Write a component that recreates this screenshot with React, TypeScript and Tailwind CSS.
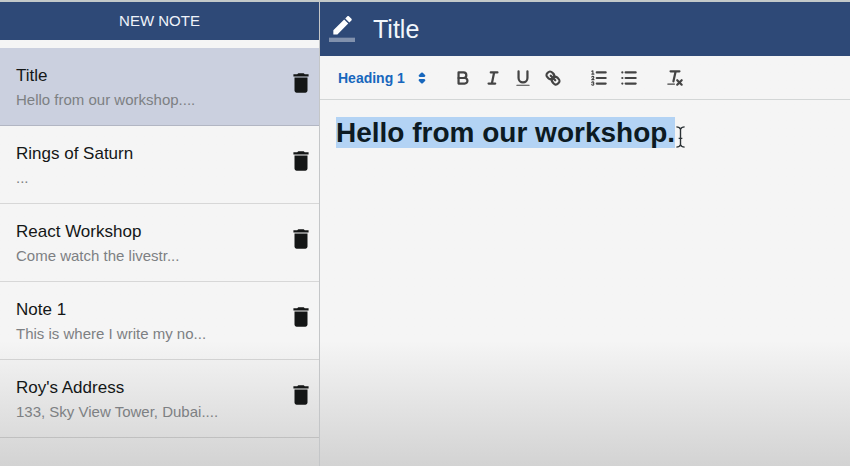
import React, { useState } from "react";

type Note = { title: string; body: string };

const notes: Note[] = [
  { title: "Title", body: "Hello from our workshop...." },
  { title: "Rings of Saturn", body: "..." },
  { title: "React Workshop", body: "Come watch the livestr..." },
  { title: "Note 1", body: "This is where I write my no..." },
  { title: "Roy's Address", body: "133, Sky View Tower, Dubai...." },
];

function TrashIcon() {
  return (
    <svg viewBox="0 0 24 24" className="size-[26px] fill-[#141616]" aria-hidden="true">
      <path d="M6 19c0 1.1.9 2 2 2h8c1.1 0 2-.9 2-2V7H6v12zM19 4h-3.5l-1-1h-5l-1 1H5v2h14V4z" />
    </svg>
  );
}

function PencilIcon() {
  return (
    <svg viewBox="0 0 24 24" className="size-[26px] shrink-0 fill-white" aria-hidden="true">
      <path d="M17.75 7L14 3.25l-10 10V17h3.75l10-10zm2.96-2.96c.39-.39.39-1.02 0-1.41L18.37.29c-.39-.39-1.02-.39-1.41 0L15 2.25 18.75 6l1.96-1.96z" />
      <path fillOpacity=".4" d="M0 20h24v4H0z" />
    </svg>
  );
}

function ToolButton({ label, children }: { label: string; children: React.ReactNode }) {
  return (
    <button type="button" aria-label={label} className="flex h-6 w-[30px] items-center justify-center">
      <svg
        viewBox="0 0 18 18"
        className="size-5 fill-none stroke-[#444] stroke-2"
        strokeLinecap="round"
        strokeLinejoin="round"
        aria-hidden="true"
      >
        {children}
      </svg>
    </button>
  );
}

function Toolbar() {
  return (
    <div className="flex h-11 items-center gap-4 border-b border-[#d3d6d6] pl-[18px]">
      <div className="relative flex w-[94px] items-center text-[#1767bd]">
        <select
          aria-label="Text style"
          className="w-full appearance-none bg-transparent text-sm font-bold leading-6 outline-none"
        >
          <option>Heading 1</option>
          <option>Heading 2</option>
          <option>Normal</option>
        </select>
        <svg
          viewBox="0 0 18 18"
          className="pointer-events-none absolute right-0 size-5 fill-current stroke-current stroke-2"
          strokeLinecap="round"
          strokeLinejoin="round"
          aria-hidden="true"
        >
          <polygon points="7 11 9 13 11 11 7 11" />
          <polygon points="7 7 9 5 11 7 7 7" />
        </svg>
      </div>
      <div className="flex">
        <ToolButton label="Bold">
          <path d="M5,4H9.5A2.5,2.5,0,0,1,12,6.5v0A2.5,2.5,0,0,1,9.5,9H5A0,0,0,0,1,5,9V4A0,0,0,0,1,5,4Z" />
          <path d="M5,9h5.5A2.5,2.5,0,0,1,13,11.5v0A2.5,2.5,0,0,1,10.5,14H5a0,0,0,0,1,0,0V9A0,0,0,0,1,5,9Z" />
        </ToolButton>
        <ToolButton label="Italic">
          <path d="M7 4h6M5 14h6M8 14l2-10" />
        </ToolButton>
        <ToolButton label="Underline">
          <path d="M5,3V9a4.012,4.012,0,0,0,4,4H9a4.012,4.012,0,0,0,4-4V3" />
          <rect className="fill-[#444] stroke-none" height="1" rx=".5" ry=".5" width="12" x="3" y="15" />
        </ToolButton>
        <ToolButton label="Link">
          <path d="M7 7l4 4" />
          <path d="M8.9,4.577a3.476,3.476,0,0,1,.36,4.679A3.476,3.476,0,0,1,4.577,8.9C3.185,7.5,2.035,6.4,4.217,4.217S7.5,3.185,8.9,4.577Z" />
          <path d="M13.423,9.1a3.476,3.476,0,0,0-4.679-.36,3.476,3.476,0,0,0,.36,4.679c1.392,1.392,2.5,2.542,4.679.36S14.815,10.5,13.423,9.1Z" />
        </ToolButton>
      </div>
      <div className="flex">
        <ToolButton label="Numbered list">
          <path d="M7 4h8M7 9h8M7 14h8" />
          <path className="stroke-1" d="M2.5 5.5h2M3.5 5.5v-3l-1 .5" />
          <path
            className="stroke-1"
            d="M4.5,10.5h-2c0-.234,1.85-1.076,1.85-2.234A0.959,0.959,0,0,0,2.5,8.156"
          />
          <path
            className="stroke-1"
            d="M2.5,14.846a0.959,0.959,0,0,0,1.85-.109A0.7,0.7,0,0,0,3.75,14a0.688,0.688,0,0,0,.6-0.736,0.959,0.959,0,0,0-1.85-.109"
          />
        </ToolButton>
        <ToolButton label="Bulleted list">
          <path d="M6 4h9M6 9h9M6 14h9M3 4h0M3 9h0M3 14h0" />
        </ToolButton>
      </div>
      <ToolButton label="Clear formatting">
        <path d="M5 3h8M7.6 12l2-9M11 11l4 4M15 11l-4 4" />
        <rect className="fill-[#444] stroke-none" height="1" rx=".5" ry=".5" width="7" x="2" y="14" />
      </ToolButton>
    </div>
  );
}

export default function App() {
  const [selected, setSelected] = useState(0);

  return (
    <div className="flex min-h-screen border-t-2 border-[#c3c9c9] bg-linear-to-b from-[#f5f5f5] from-73% to-[#d3d3d3] font-['Liberation_Sans',Arial,sans-serif]">
      <aside className="w-80 shrink-0 border-r border-[#c4c6c8]">
        <button type="button" className="mb-2 h-[38px] w-full bg-[#2e4977] text-[15px] text-[#eef3fa]">
          NEW NOTE
        </button>
        <ul>
          {notes.map((note, i) => (
            <li
              key={note.title}
              className={
                "flex h-[78px] items-start justify-between border-b border-black/12 pl-4 pr-[5px] " +
                (i === selected ? "bg-[#cbd0df]" : "")
              }
            >
              <button type="button" onClick={() => setSelected(i)} className="grow pt-4 text-left">
                <span className="block text-[17px] leading-6 text-[#141717]">{note.title}</span>
                <span className="block text-[15px] leading-6 text-[#7d8083]">{note.body}</span>
              </button>
              <button type="button" aria-label={"Delete " + note.title} className="mt-[22px]">
                <TrashIcon />
              </button>
            </li>
          ))}
        </ul>
      </aside>
      <main className="min-w-0 grow">
        <header className="flex h-[54px] items-center gap-[18px] bg-[#2e4977] pl-[9px]">
          <PencilIcon />
          <input
            aria-label="Note title"
            defaultValue="Title"
            className="min-w-0 grow bg-transparent text-[25px] leading-9 text-[#f2f6fb] outline-none"
          />
        </header>
        <Toolbar />
        <div className="flex items-center px-4 py-[15px]">
          <h1 className="text-[28px] font-bold leading-9 text-[#0c1a22]">
            <span className="bg-[#b3d3f4]">Hello from our workshop.</span>
          </h1>
          <svg
            viewBox="0 0 12 26"
            className="mt-2 h-6 w-[11px] fill-none stroke-[#2b3236] stroke-[1.5]"
            aria-hidden="true"
          >
            <path d="M1.500 2Q5 2 6 4.500Q7 2 10.500 2M6 4.500V21.500M1.500 24Q5 24 6 21.500Q7 24 10.500 24M4 14.500h4" />
          </svg>
        </div>
      </main>
    </div>
  );
}
